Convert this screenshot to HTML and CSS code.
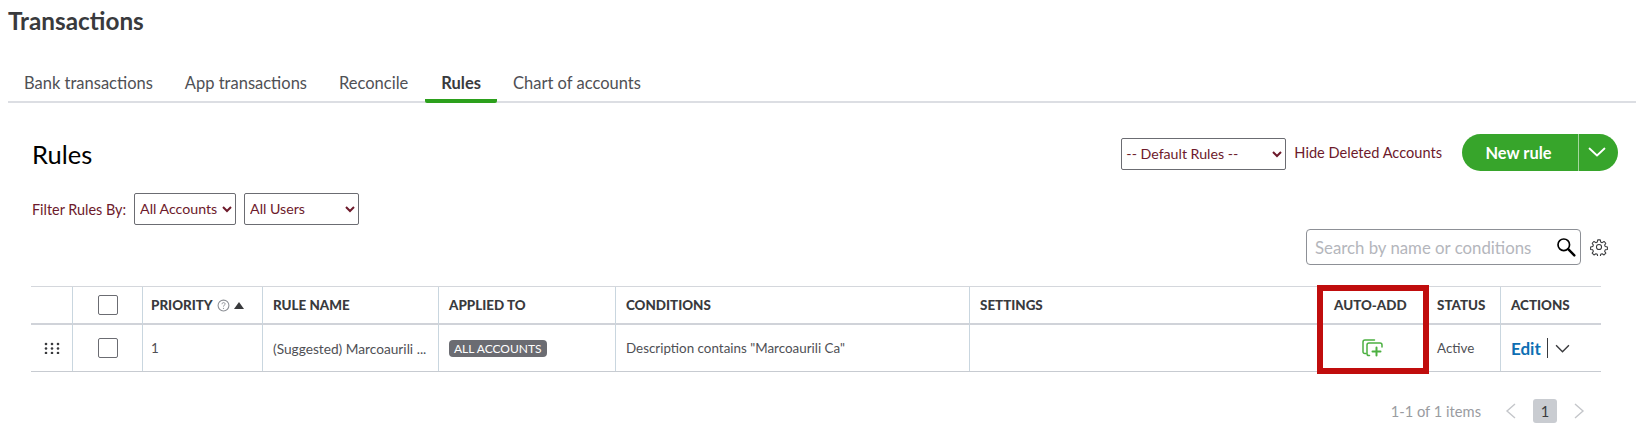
FILE: index.html
```html
<!DOCTYPE html>
<html lang="en">
  <head>
    <meta charset="UTF-8" />
    <title>Transactions - Rules</title>
    <link rel="stylesheet" href="styles.css">
  </head>
  <body>
    <h1 class="page-title">Transactions</h1>

    <nav class="tabs">
      <a class="tab">Bank transactions</a>
      <a class="tab">App transactions</a>
      <a class="tab">Reconcile</a>
      <a class="tab active">Rules</a>
      <a class="tab">Chart of accounts</a>
    </nav>

    <div class="content">
      <div class="top-row">
        <h2 class="rules-title">Rules</h2>
        <div class="top-actions">
          <select class="field default-rules">
            <option>-- Default Rules --</option>
          </select>
          <a class="hide-link">Hide Deleted Accounts</a>
          <div class="split-button">
            <button class="split-main">New rule</button>
            <button class="split-arrow">
              <svg width="18" height="10" viewBox="0 0 18 10"><path d="M1.5 1.5 9 8.5l7.5-7" fill="none" stroke="#fff" stroke-width="1.8" stroke-linecap="round" stroke-linejoin="round"/></svg>
            </button>
          </div>
        </div>
      </div>

      <div class="filter-row">
        <span class="filter-label">Filter Rules By:</span>
        <select class="field accounts">
          <option>All Accounts</option>
        </select>
        <select class="field users">
          <option>All Users</option>
        </select>
      </div>

      <div class="search-row">
        <div class="search-box">
          <input class="search-input" type="text" placeholder="Search by name or conditions" />
          <svg width="20" height="20" viewBox="0 0 18 18"><circle cx="7" cy="7" r="5.2" fill="none" stroke="#000" stroke-width="1.5"/><path d="M11 11l5.500 5.500" stroke="#000" stroke-width="2.200" stroke-linecap="round"/></svg>
        </div>
        <svg class="gear" width="18" height="18" viewBox="0 0 24 24" fill="none" stroke="#393a3d" stroke-width="1.4" stroke-linejoin="round"><circle cx="12" cy="12" r="3.400"/><path d="M10.300 2.500h3.400l.6 2.900 1.900.8 2.500-1.600 2.400 2.400-1.600 2.500.8 1.900 2.900.6v3.200l-2.900.6-.8 1.900 1.600 2.500-2.400 2.400-2.500-1.600-1.900.8-.6 2.900h-3.400l-.6-2.900-1.900-.8-2.500 1.600-2.400-2.400 1.600-2.500-.8-1.900-2.900-.6v-3.200l2.900-.6.8-1.900-1.600-2.500 2.400-2.400 2.500 1.600 1.900-.8z"/></svg>
      </div>

      <div class="rules-table">
        <div class="cell head"></div>
        <div class="cell head center"><span class="checkbox"></span></div>
        <div class="cell head priority">
          PRIORITY
          <svg class="help" width="13" height="13" viewBox="0 0 12 12"><circle cx="6" cy="6" r="5" fill="none" stroke="#8d9096"/><path d="M4.600 4.800c0-2 2.900-1.900 2.900-.2 0 1.100-1.500 1.100-1.500 2.400" fill="none" stroke="#8d9096" stroke-width=".9"/><circle cx="6" cy="8.600" r=".6" fill="#8d9096"/></svg>
          <span class="sort-up"></span>
        </div>
        <div class="cell head">RULE NAME</div>
        <div class="cell head">APPLIED TO</div>
        <div class="cell head">CONDITIONS</div>
        <div class="cell head">SETTINGS</div>
        <div class="cell head auto-add">AUTO-ADD</div>
        <div class="cell head">STATUS</div>
        <div class="cell head">ACTIONS</div>

        <div class="cell center">
          <svg width="16" height="12" viewBox="0 0 16 12" fill="#393a3d"><circle cx="2" cy="2" r="1.300"/><circle cx="8" cy="2" r="1.300"/><circle cx="14" cy="2" r="1.300"/><circle cx="2" cy="6.500" r="1.300"/><circle cx="8" cy="6.500" r="1.300"/><circle cx="14" cy="6.500" r="1.300"/><circle cx="2" cy="11" r="1.300"/><circle cx="8" cy="11" r="1.300"/><circle cx="14" cy="11" r="1.300"/></svg>
        </div>
        <div class="cell center"><span class="checkbox"></span></div>
        <div class="cell priority">1</div>
        <div class="cell rule-name">(Suggested) Marcoaurili ...</div>
        <div class="cell"><span class="tag">ALL ACCOUNTS</span></div>
        <div class="cell">Description contains "Marcoaurili Ca"</div>
        <div class="cell"></div>
        <div class="cell center">
          <svg width="21" height="18" viewBox="0 0 21 18" fill="none" stroke="#4cb041" stroke-width="1.500" stroke-linecap="round" stroke-linejoin="round"><path d="M4 14.500H2.800A1.800 1.800 0 0 1 1 12.700V3a2 2 0 0 1 2-2h9.500"/><path d="M7.500 16.500H6.800A1.800 1.800 0 0 1 5 14.700V6a2 2 0 0 1 2-2h11a2 2 0 0 1 2 2v2"/><path d="M14.500 8.500v8M10.500 12.500h8" stroke-width="2"/></svg>
        </div>
        <div class="cell">Active</div>
        <div class="cell actions">
          <a class="edit">Edit</a>
          <span class="divider"></span>
          <svg width="15" height="9" viewBox="0 0 14 8"><path d="M1 1l6 6 6-6" fill="none" stroke="#393a3d" stroke-width="1.300"/></svg>
        </div>
        <div class="highlight"></div>
      </div>

      <div class="pager">
        <span class="pager-count">1-1 of 1 items</span>
        <svg width="11" height="16" viewBox="0 0 11 16"><path d="M10 1 2 8l8 7" fill="none" stroke="#c4c6ca" stroke-width="1.400"/></svg>
        <span class="page-num">1</span>
        <svg width="11" height="16" viewBox="0 0 11 16"><path d="M1 1l8 7-8 7" fill="none" stroke="#c4c6ca" stroke-width="1.400"/></svg>
      </div>
    </div>
  </body>
</html>
```

FILE: styles.css
```css
* {
  box-sizing: border-box;
}

body {
  margin: 0;
  height: 432px;
  overflow: hidden;
  background-color: #fff;
  color: #393a3d;
  font-family: "Lato", "Open Sans", sans-serif;
}

.page-title {
  margin: 0;
  padding: 8px 0 0 8px;
  height: 64px;
  font-size: 24.3px;
  line-height: 26px;
  font-weight: 700;
}

.tabs {
  display: flex;
  height: 39px;
  margin-left: 8px;
  border-bottom: 2px solid #dcdee3;
}

.tab {
  padding: 9px 16px 0;
  font-size: 16.5px;
  line-height: 20px;
  color: #4f5055;
}

.tab.active {
  margin: 0 0 -2px 1px;
  font-weight: 700;
  color: #393a3d;
  border-bottom: 4px solid #2ca01c;
  border-radius: 2px;
}

.content {
  padding: 0 35px 0 31px;
}

.top-row {
  display: flex;
  justify-content: space-between;
  align-items: center;
  height: 52px;
  margin-top: 25px;
  margin-right: -17px;
  padding-left: 1px;
}

.rules-title {
  margin: 0;
  font-size: 25.5px;
  font-weight: 400;
  color: #000;
}

.top-actions {
  display: flex;
  align-items: center;
}

.field {
  height: 32px;
  padding: 0 1px 2px;
  background-color: #fff;
  border: 1px solid #6b6c72;
  border-radius: 2px;
  font-family: inherit;
  font-size: 14.2px;
  color: #6d1a2b;
}

.default-rules {
  width: 165px;
  margin-right: 8px;
  padding: 0 0 2px;
}

.hide-link {
  margin: -4px 20px 0 0;
  font-size: 14.6px;
  color: #6d1a2b;
}

.split-button {
  display: flex;
  height: 37px;
  margin-top: -4px;
  border-radius: 19px;
  overflow: hidden;
}

.split-button button {
  height: 37px;
  border: none;
  background-color: #37a52b;
  color: #fff;
  font-family: inherit;
}

.split-main {
  width: 116px;
  padding: 0 3px 0 0;
  font-size: 16.4px;
  font-weight: 700;
}

.split-arrow {
  display: flex;
  align-items: center;
  justify-content: center;
  width: 40px;
  padding: 0 4px 0 0;
  border-left: 1px solid #a5d79f !important;
}

.filter-row {
  display: flex;
  align-items: center;
  margin-top: 13px;
  padding-left: 1px;
}

.filter-label {
  margin-right: 8px;
  font-size: 14.4px;
  color: #6d1a2b;
}

.accounts {
  width: 102px;
  margin-right: 8px;
}

.users {
  width: 115px;
}

.search-row {
  display: flex;
  justify-content: flex-end;
  align-items: center;
  gap: 9px;
  margin-top: 4px;
  margin-right: -7px;
}

.search-box {
  display: flex;
  align-items: center;
  width: 275px;
  height: 36px;
  padding: 0 4px 0 8px;
  border: 1px solid #8d9096;
  border-radius: 4px;
}

.search-input {
  flex: 1;
  min-width: 0;
  border: none;
  outline: none;
  padding: 0;
  font-family: inherit;
  font-size: 16.8px;
}

.search-input::placeholder {
  color: #b4b6bc;
}

.rules-table {
  position: relative;
  display: grid;
  grid-template-columns: 41px 70px 120px 176px 177px 354px 349px 108px 74px 1fr;
  grid-template-rows: 38px 46px;
  margin-top: 21px;
  border-top: 1px solid #d4d7dc;
  border-bottom: 1px solid #c7cbd1;
}

.cell {
  display: flex;
  align-items: center;
  padding-left: 10px;
  border-left: 1px solid #c9d6df;
  font-size: 13.4px;
  color: #4f5055;
}

.cell:first-child,
.cell:nth-child(11) {
  border-left: none;
}

.cell.center {
  justify-content: center;
  padding-left: 0;
}

.cell.priority {
  padding-left: 8px;
}

.cell.rule-name {
  font-size: 13.7px;
}

.cell.head {
  border-bottom: 2px solid #d0d3d9;
  font-size: 13.4px;
  font-weight: 900;
  color: #393a3d;
}

.cell.auto-add {
  padding-left: 15px;
}

.checkbox {
  width: 20px;
  height: 20px;
  background-color: #fff;
  border: 1px solid #6b6c72;
  border-radius: 2px;
}

.help {
  margin: 0 4px;
}

.sort-up {
  width: 0;
  height: 0;
  border-left: 5px solid transparent;
  border-right: 5px solid transparent;
  border-bottom: 7px solid #393a3d;
}

.tag {
  padding: 1px 5px;
  background-color: #6b6c72;
  border-radius: 4px;
  font-size: 12px;
  line-height: 15px;
  color: #fff;
}

.actions {
  gap: 6px;
}

.edit {
  font-size: 17px;
  font-weight: 700;
  color: #0d6fb3;
}

.divider {
  width: 1px;
  height: 20px;
  margin-right: 1px;
  background-color: #393a3d;
}

/* red box drawn over the auto-add column */
.highlight {
  position: absolute;
  top: -2px;
  left: 1286px;
  width: 112px;
  height: 89px;
  border: 6px solid #c00d0d;
}

.pager {
  display: flex;
  justify-content: flex-end;
  align-items: center;
  height: 24px;
  margin-top: 27px;
  padding-right: 16px;
  font-size: 14.7px;
}

.pager-count {
  margin-right: 24px;
  color: #9a9ca1;
}

.page-num {
  width: 24px;
  height: 24px;
  margin: 0 17px;
  background-color: #c9ccd1;
  border-radius: 3px;
  text-align: center;
  line-height: 24px;
  color: #393a3d;
}
```
